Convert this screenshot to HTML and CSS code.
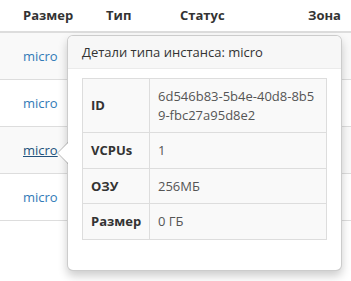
FILE: index.html
```html
<!DOCTYPE html>
<html lang="ru">
<head>
  <meta charset="UTF-8">
  <meta name="viewport" content="width=device-width, initial-scale=1.0">
  <title>Типы инстансов</title>
  <link rel="stylesheet" href="styles.css">
</head>
<body>
  <table class="flavors">
    <colgroup>
      <col class="col-size">
      <col class="col-type">
      <col class="col-status">
      <col>
    </colgroup>
    <thead>
      <tr>
        <th>Размер</th>
        <th>Тип</th>
        <th>Статус</th>
        <th>Зона</th>
      </tr>
    </thead>
    <tbody>
      <tr class="odd"><td><a href="#">micro</a></td><td></td><td></td><td></td></tr>
      <tr><td><a href="#">micro</a></td><td></td><td></td><td></td></tr>
      <tr class="odd"><td><a href="#" class="active">micro</a></td><td></td><td></td><td></td></tr>
      <tr><td><a href="#">micro</a></td><td></td><td></td><td></td></tr>
    </tbody>
  </table>

  <!-- Popover with flavor details -->
  <div class="popover">
    <div class="arrow"></div>
    <h3 class="popover-title">Детали типа инстанса: micro</h3>
    <div class="popover-content">
      <table class="details">
        <tr><th>ID</th><td>6d546b83-5b4e-40d8-8b59-fbc27a95d8e2</td></tr>
        <tr><th>VCPUs</th><td><span class="value">1</span></td></tr>
        <tr><th>ОЗУ</th><td>256МБ</td></tr>
        <tr><th>Размер</th><td>0 ГБ</td></tr>
      </table>
    </div>
  </div>
</body>
</html>
```

FILE: styles.css
```css
html {
  height: 100%;
  overflow: hidden;
}

body {
  margin: 0;
  height: 100%;
  position: relative;
  font-family: "Open Sans", "Liberation Sans", sans-serif;
  font-size: 13px;
  color: #333;
  background: #fff;
}

a {
  color: #337ab7;
  text-decoration: none;
}

a.active {
  color: #23527c;
  text-decoration: underline;
}

.flavors {
  width: 100%;
  table-layout: fixed;
  border-collapse: collapse;
}

.col-size { width: 98px; }
.col-type { width: 74px; }
.col-status { width: 128px; }

.flavors th {
  text-align: left;
  font-weight: bold;
  padding: 6px 8px;
  line-height: 19px;
  border-bottom: 2px solid #ddd;
  white-space: nowrap;
}

.flavors td {
  padding: 13px 8px;
  line-height: 20px;
  border-bottom: 1px solid #ddd;
}

.flavors th:first-child,
.flavors td:first-child {
  padding-left: 23px;
}

.flavors tr.odd td {
  background: #f9f9f9;
}

/* Popover */
.popover {
  position: absolute;
  left: 67px;
  top: 35px;
  width: 273px;
  background: #fff;
  border: 1px solid rgba(0, 0, 0, 0.2);
  border-radius: 6px;
  box-shadow: 0 5px 10px rgba(0, 0, 0, 0.2);
}

.popover .arrow,
.popover .arrow::after {
  position: absolute;
  width: 0;
  height: 0;
  border: solid transparent;
}

.popover .arrow {
  left: -11px;
  top: 106px;
  border-width: 11px 11px 11px 0;
  border-right-color: rgba(0, 0, 0, 0.25);
}

.popover .arrow::after {
  content: '';
  left: 1px;
  top: -10px;
  border-width: 10px 10px 10px 0;
  border-right-color: #fff;
}

.popover-title {
  margin: 0;
  padding: 8px 14px;
  font-size: 13px;
  font-weight: normal;
  line-height: 16px;
  background: #f7f7f7;
  border-bottom: 1px solid #ebebeb;
  border-radius: 5px 5px 0 0;
}

.popover-content {
  padding: 9px 14px 10px;
}

.details {
  width: 100%;
  margin-bottom: 20px;
  border-collapse: collapse;
  table-layout: fixed;
}

.details th,
.details td {
  padding: 8px;
  line-height: 18.5px;
  border: 1px solid #ddd;
  background: #f9f9f9;
  text-align: left;
  vertical-align: middle;
}

.details th {
  width: 50px;
  font-weight: bold;
}

.details td,
.details .value {
  color: #555;
  word-break: break-all;
}
```
